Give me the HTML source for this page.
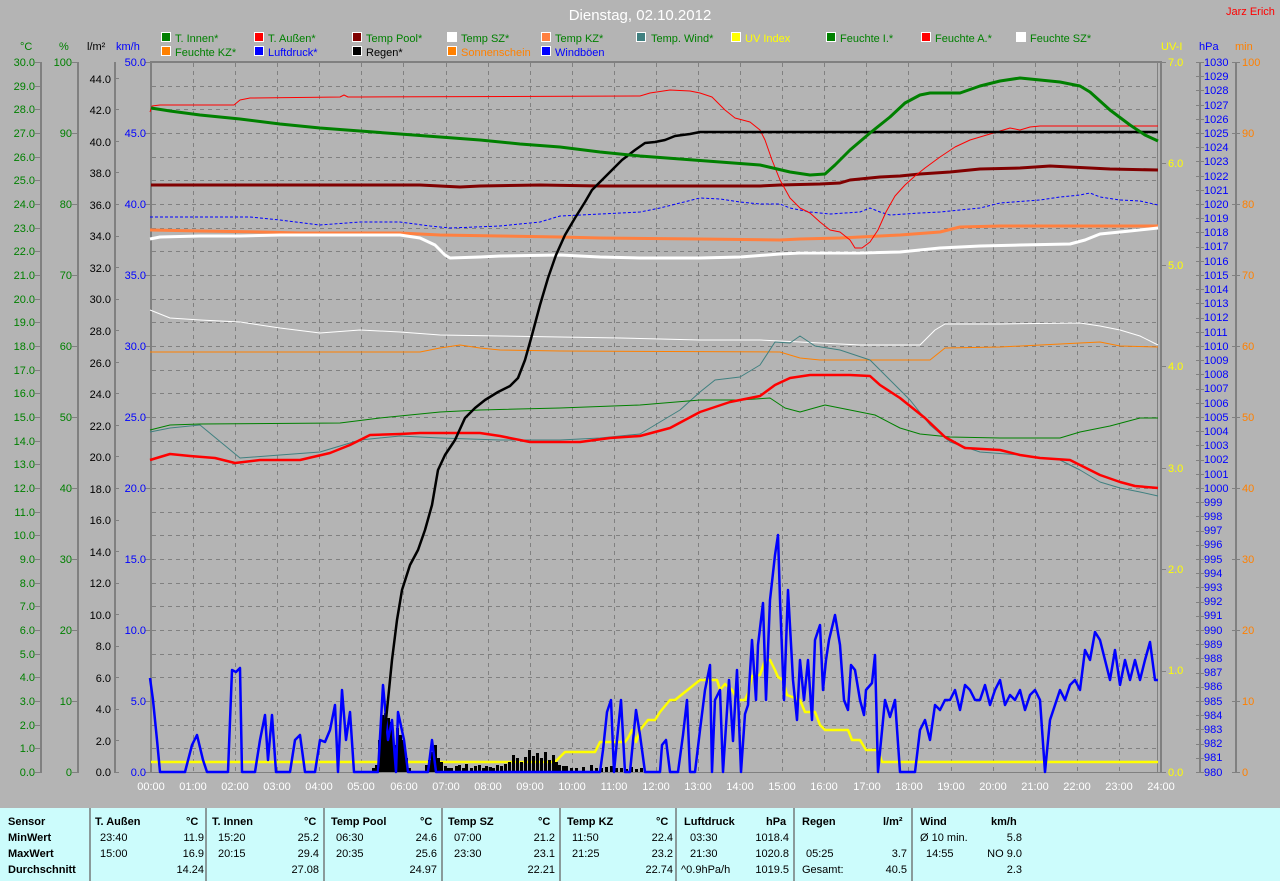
<!DOCTYPE html>
<html><head><meta charset="utf-8"><style>
html,body{margin:0;padding:0;background:#b4b4b4;}
body{width:1280px;height:881px;overflow:hidden;position:relative;font-family:"Liberation Sans",sans-serif;}
svg text{font-family:"Liberation Sans",sans-serif;font-size:11px;}
#tbl{position:absolute;left:0;top:808px;width:1280px;height:73px;background:#ccfcfc;font-size:11px;color:#000;}
#tbl .c{position:absolute;top:0;height:73px;border-right:2px solid #8a9a9a;}
#tbl span{position:absolute;white-space:nowrap;}
#tbl b{position:absolute;white-space:nowrap;}
</style></head><body>
<svg width="1280" height="808" style="position:absolute;left:0;top:0">
<text x="640" y="20" fill="#fff" font-size="15" text-anchor="middle" style="font-size:15px">Dienstag, 02.10.2012</text>
<text x="1226" y="15" fill="#ff0000">Jarz Erich</text>
<g stroke="#fff" stroke-width="1">
<rect x="161.5" y="32.5" width="9" height="9" fill="#008000"/><rect x="254.5" y="32.5" width="9" height="9" fill="#ff0000"/><rect x="352.5" y="32.5" width="9" height="9" fill="#800000"/><rect x="447.5" y="32.5" width="9" height="9" fill="#fff"/><rect x="541.5" y="32.5" width="9" height="9" fill="#ff8040"/><rect x="636.5" y="32.5" width="9" height="9" fill="#408080"/><rect x="731.5" y="32.5" width="9" height="9" fill="#ffff00"/><rect x="826.5" y="32.5" width="9" height="9" fill="#008000"/><rect x="921.5" y="32.5" width="9" height="9" fill="#ff0000"/><rect x="1016.5" y="32.5" width="9" height="9" fill="#fff"/>
<rect x="161.5" y="46.5" width="9" height="9" fill="#ff8000"/><rect x="254.5" y="46.5" width="9" height="9" fill="#0000ff"/><rect x="352.5" y="46.5" width="9" height="9" fill="#000"/><rect x="447.5" y="46.5" width="9" height="9" fill="#ff8000"/><rect x="541.5" y="46.5" width="9" height="9" fill="#0000ff"/>
</g>
<g fill="#008000">
<text x="175" y="42">T. Innen*</text><text x="268" y="42">T. Außen*</text><text x="366" y="42">Temp Pool*</text><text x="461" y="42">Temp SZ*</text><text x="555" y="42">Temp KZ*</text><text x="651" y="42">Temp. Wind*</text><text x="840" y="42">Feuchte I.*</text><text x="935" y="42">Feuchte A.*</text><text x="1030" y="42">Feuchte SZ*</text>
<text x="175" y="56">Feuchte KZ*</text></g>
<text x="745" y="42" fill="#ffff00">UV Index</text>
<text x="268" y="56" fill="#0000ff">Luftdruck*</text><text x="366" y="56" fill="#000">Regen*</text><text x="461" y="56" fill="#ff8000">Sonnenschein</text><text x="555" y="56" fill="#0000ff">Windböen</text>
<text x="20" y="50" fill="#008000">°C</text><text x="59" y="50" fill="#008000">%</text><text x="87" y="50" fill="#000">l/m²</text><text x="116" y="50" fill="#0000ff">km/h</text>
<text x="1161" y="50" fill="#ffff00">UV-I</text><text x="1199" y="50" fill="#0000ff">hPa</text><text x="1235" y="50" fill="#ff8000">min</text>
<line x1="150" y1="62" x2="1162" y2="62" stroke="#808080" stroke-width="2"/>
<line x1="151" y1="61" x2="151" y2="773" stroke="#808080" stroke-width="2"/>
<line x1="1157.5" y1="62" x2="1157.5" y2="772" stroke="#808080" stroke-width="1"/>
<line x1="1161" y1="62" x2="1161" y2="773" stroke="#808080" stroke-width="2"/>
<line x1="150" y1="772.5" x2="1162" y2="772.5" stroke="#808080" stroke-width="1"/>
<g id="grid" stroke="#808080" stroke-dasharray="4,4" stroke-width="1"></g>
<g stroke="#808080" stroke-width="2"><line x1="41" y1="62" x2="41" y2="773"/><line x1="78" y1="62" x2="78" y2="773"/><line x1="115" y1="62" x2="115" y2="773"/><line x1="1200" y1="62" x2="1200" y2="773"/><line x1="1236" y1="62" x2="1236" y2="773"/></g>
<g id="ticks" stroke="#808080" stroke-width="1"></g>
<g fill="#008000" text-anchor="end">
<text x="35" y="66">30.0</text><text x="35" y="90">29.0</text><text x="35" y="113">28.0</text><text x="35" y="137">27.0</text><text x="35" y="161">26.0</text><text x="35" y="184">25.0</text><text x="35" y="208">24.0</text><text x="35" y="232">23.0</text><text x="35" y="255">22.0</text><text x="35" y="279">21.0</text><text x="35" y="303">20.0</text><text x="35" y="326">19.0</text><text x="35" y="350">18.0</text><text x="35" y="374">17.0</text><text x="35" y="397">16.0</text><text x="35" y="421">15.0</text><text x="35" y="445">14.0</text><text x="35" y="468">13.0</text><text x="35" y="492">12.0</text><text x="35" y="516">11.0</text><text x="35" y="539">10.0</text><text x="35" y="563">9.0</text><text x="35" y="587">8.0</text><text x="35" y="610">7.0</text><text x="35" y="634">6.0</text><text x="35" y="658">5.0</text><text x="35" y="681">4.0</text><text x="35" y="705">3.0</text><text x="35" y="729">2.0</text><text x="35" y="752">1.0</text><text x="35" y="776">0.0</text>
<text x="72" y="66">100</text><text x="72" y="137">90</text><text x="72" y="208">80</text><text x="72" y="279">70</text><text x="72" y="350">60</text><text x="72" y="421">50</text><text x="72" y="492">40</text><text x="72" y="563">30</text><text x="72" y="634">20</text><text x="72" y="705">10</text><text x="72" y="776">0</text>
</g>
<g fill="#000" text-anchor="end">
<text x="111" y="83">44.0</text><text x="111" y="114">42.0</text><text x="111" y="146">40.0</text><text x="111" y="177">38.0</text><text x="111" y="209">36.0</text><text x="111" y="240">34.0</text><text x="111" y="272">32.0</text><text x="111" y="303">30.0</text><text x="111" y="335">28.0</text><text x="111" y="367">26.0</text><text x="111" y="398">24.0</text><text x="111" y="430">22.0</text><text x="111" y="461">20.0</text><text x="111" y="493">18.0</text><text x="111" y="524">16.0</text><text x="111" y="556">14.0</text><text x="111" y="587">12.0</text><text x="111" y="619">10.0</text><text x="111" y="650">8.0</text><text x="111" y="682">6.0</text><text x="111" y="713">4.0</text><text x="111" y="745">2.0</text><text x="111" y="776">0.0</text>
</g>
<g fill="#0000ff" text-anchor="end">
<text x="146" y="66">50.0</text><text x="146" y="137">45.0</text><text x="146" y="208">40.0</text><text x="146" y="279">35.0</text><text x="146" y="350">30.0</text><text x="146" y="421">25.0</text><text x="146" y="492">20.0</text><text x="146" y="563">15.0</text><text x="146" y="634">10.0</text><text x="146" y="705">5.0</text><text x="146" y="776">0.0</text>
</g>
<g fill="#ffff00"><text x="1168" y="66">7.0</text><text x="1168" y="167">6.0</text><text x="1168" y="269">5.0</text><text x="1168" y="370">4.0</text><text x="1168" y="472">3.0</text><text x="1168" y="573">2.0</text><text x="1168" y="674">1.0</text><text x="1168" y="776">0.0</text></g>
<g fill="#ff8000"><text x="1242" y="66">100</text><text x="1242" y="137">90</text><text x="1242" y="208">80</text><text x="1242" y="279">70</text><text x="1242" y="350">60</text><text x="1242" y="421">50</text><text x="1242" y="492">40</text><text x="1242" y="563">30</text><text x="1242" y="634">20</text><text x="1242" y="705">10</text><text x="1242" y="776">0</text></g>
<g fill="#0000ff" style="font-size:10.5px">
<text x="1204" y="66">1030</text><text x="1204" y="80">1029</text><text x="1204" y="94">1028</text><text x="1204" y="109">1027</text><text x="1204" y="123">1026</text><text x="1204" y="137">1025</text><text x="1204" y="151">1024</text><text x="1204" y="165">1023</text><text x="1204" y="180">1022</text><text x="1204" y="194">1021</text><text x="1204" y="208">1020</text><text x="1204" y="222">1019</text><text x="1204" y="236">1018</text><text x="1204" y="250">1017</text><text x="1204" y="265">1016</text><text x="1204" y="279">1015</text><text x="1204" y="293">1014</text><text x="1204" y="307">1013</text><text x="1204" y="321">1012</text><text x="1204" y="336">1011</text><text x="1204" y="350">1010</text><text x="1204" y="364">1009</text><text x="1204" y="378">1008</text><text x="1204" y="392">1007</text><text x="1204" y="407">1006</text><text x="1204" y="421">1005</text><text x="1204" y="435">1004</text><text x="1204" y="449">1003</text><text x="1204" y="463">1002</text><text x="1204" y="478">1001</text><text x="1204" y="492">1000</text><text x="1204" y="506">999</text><text x="1204" y="520">998</text><text x="1204" y="534">997</text><text x="1204" y="548">996</text><text x="1204" y="563">995</text><text x="1204" y="577">994</text><text x="1204" y="591">993</text><text x="1204" y="605">992</text><text x="1204" y="619">991</text><text x="1204" y="634">990</text><text x="1204" y="648">989</text><text x="1204" y="662">988</text><text x="1204" y="676">987</text><text x="1204" y="690">986</text><text x="1204" y="705">985</text><text x="1204" y="719">984</text><text x="1204" y="733">983</text><text x="1204" y="747">982</text><text x="1204" y="761">981</text><text x="1204" y="776">980</text>
</g>
<g fill="#fff" text-anchor="middle">
<text x="151" y="790">00:00</text><text x="193" y="790">01:00</text><text x="235" y="790">02:00</text><text x="277" y="790">03:00</text><text x="319" y="790">04:00</text><text x="361" y="790">05:00</text><text x="404" y="790">06:00</text><text x="446" y="790">07:00</text><text x="488" y="790">08:00</text><text x="530" y="790">09:00</text><text x="572" y="790">10:00</text><text x="614" y="790">11:00</text><text x="656" y="790">12:00</text><text x="698" y="790">13:00</text><text x="740" y="790">14:00</text><text x="782" y="790">15:00</text><text x="824" y="790">16:00</text><text x="867" y="790">17:00</text><text x="909" y="790">18:00</text><text x="951" y="790">19:00</text><text x="993" y="790">20:00</text><text x="1035" y="790">21:00</text><text x="1077" y="790">22:00</text><text x="1119" y="790">23:00</text><text x="1161" y="790">24:00</text>
</g>
<g fill="none" stroke-linejoin="round">
<polyline stroke="#ffffff" stroke-width="1" points="150,310 170,318 200,320 240,322 280,328 320,333 360,330 400,332 440,335 500,336 560,337 620,338 700,340 760,340 800,342 860,345 920,345 935,330 945,324 1000,324 1080,323 1100,326 1120,330 1140,336 1158,345"/>
<polyline stroke="#ff8000" stroke-width="1" points="150,352 420,352 440,348 460,345 480,348 500,350 560,351 780,352 800,358 820,360 930,360 945,348 1000,347 1080,343 1100,342 1120,346 1158,347"/>
<polyline stroke="#408080" stroke-width="1" points="150,432 170,428 200,425 240,458 280,455 320,452 360,440 400,436 440,438 500,440 560,440 600,438 640,434 680,410 700,392 715,380 740,377 760,365 775,342 790,343 800,336 815,346 840,350 870,360 890,380 910,400 930,425 950,442 980,452 1020,455 1060,460 1080,470 1100,482 1120,488 1140,492 1158,496"/>
<polyline stroke="#008000" stroke-width="1" points="150,430 170,425 200,424 340,423 380,418 440,412 480,410 560,408 640,405 700,400 740,400 770,398 785,408 800,412 825,405 850,410 875,415 900,428 920,434 950,437 1000,438 1060,438 1080,432 1110,426 1140,418 1158,418"/>
<polyline stroke="#ff0000" stroke-width="2.5" points="150,460 170,454 190,456 215,458 235,463 260,460 300,460 330,453 350,445 370,435 400,434 420,433 480,433 500,436 530,442 580,442 610,438 640,436 670,428 700,412 730,402 760,396 775,385 790,378 810,375 850,375 870,376 880,385 900,398 925,418 945,437 965,448 1000,450 1020,455 1040,458 1070,460 1080,465 1100,475 1120,482 1135,486 1158,488"/>
<polyline stroke="#ffff00" stroke-width="2.5" points="151,762 555,762 565,752 595,752 600,742 625,742 628,738 632,730 636,742 640,730 648,720 655,720 660,712 670,700 675,700 690,688 700,680 717,680 720,690 725,684 732,690 738,700 745,700 748,693 752,676 760,675 765,660 770,660 775,670 778,677 783,680 787,695 800,700 805,712 815,712 820,725 825,730 848,730 852,740 860,740 866,750 878,750 882,762 1158,762"/>
<path id="rain" fill="#000" stroke="none" d=""/>
<polyline stroke="#0000ff" stroke-width="2.5" points="150,678 153,700 157,740 160,772 185,772 192,745 197,735 203,760 207,772 228,772 232,670 236,672 240,668 242,772 255,772 260,740 265,715 268,760 272,715 276,772 290,772 295,740 300,735 305,772 315,772 320,740 325,742 330,730 335,705 338,772 342,690 346,740 350,712 354,772 378,772 383,685 388,740 392,720 396,772 398,712 404,740 408,772 428,772 432,740 436,772 600,772 603,750 607,712 611,700 614,772 617,740 621,700 625,772 630,772 636,710 640,735 645,772 660,772 662,745 666,740 670,772 678,772 683,735 687,700 690,772 695,772 700,730 705,690 710,665 712,772 715,700 720,690 723,772 729,680 733,741 737,670 741,772 745,714 748,705 752,640 756,700 758,645 763,603 766,700 770,600 775,555 778,535 780,600 784,700 788,590 793,680 797,720 800,660 804,700 808,660 812,720 815,640 820,625 823,690 826,660 829,640 835,615 840,645 844,700 848,710 851,665 855,670 860,700 864,715 866,690 872,683 875,655 878,772 885,700 890,717 895,700 900,772 915,772 920,730 925,720 930,740 935,705 940,710 945,700 950,700 955,690 960,710 965,685 970,690 975,700 980,700 985,685 990,705 995,690 1000,680 1005,705 1010,695 1015,700 1020,690 1025,710 1030,695 1035,690 1040,700 1045,772 1050,720 1055,705 1060,690 1065,700 1070,685 1075,680 1080,690 1085,650 1090,660 1095,632 1100,640 1105,660 1110,680 1115,650 1120,685 1125,660 1130,680 1135,660 1140,680 1145,660 1150,642 1155,680 1158,680"/>
<polyline stroke="#0000ff" stroke-width="1" stroke-dasharray="3,2" points="150,217 250,217 280,220 320,225 360,222 400,222 430,226 450,228 500,226 540,222 560,216 600,214 640,212 660,208 680,203 700,198 720,199 740,202 760,204 780,204 790,208 810,212 830,214 860,212 870,208 880,212 890,215 920,213 940,212 960,210 980,208 1000,203 1040,200 1060,197 1080,195 1090,193 1100,197 1120,200 1140,201 1158,205"/>
<polyline stroke="#ff8040" stroke-width="3" points="150,230 200,231 260,232 300,233 340,233 400,233 440,235 500,236 560,237 600,238 700,239 780,240 800,239 840,238 860,237 880,236 900,235 940,232 960,227 1000,226 1080,226 1120,226 1158,226"/>
<polyline stroke="#ffffff" stroke-width="3" points="150,239 160,237 200,236 240,236 280,235 400,235 420,238 435,245 445,255 450,258 480,257 500,256 560,255 600,257 640,258 700,258 740,257 780,254 800,253 860,253 900,252 940,248 980,246 1020,245 1070,244 1085,240 1100,234 1130,231 1158,228"/>
<polyline stroke="#800000" stroke-width="3" points="151,185 420,185 440,186 460,187 480,186 540,185 600,186 700,186 760,186 780,185 820,184 840,183 850,180 880,177 900,176 920,174 950,172 980,169 1020,168 1050,166 1070,167 1090,168 1110,169 1158,170"/>
<polyline stroke="#ff0000" stroke-width="1" points="150,112 152,106 160,105 200,105 234,105 240,100 250,98 340,97 344,95 348,97 360,97 640,96 650,93 670,90 690,91 700,93 712,97 725,110 735,118 750,122 760,130 765,140 772,160 780,180 790,198 800,208 810,213 820,222 830,230 840,232 850,240 855,248 862,248 870,242 878,230 886,212 895,196 905,185 915,176 925,168 940,157 955,147 970,140 990,134 1000,131 1010,128 1020,130 1030,127 1040,126 1060,126 1080,126 1158,126"/>
<polyline stroke="#000" stroke-width="2.5" points="380,772 384,740 388,700 392,660 397,620 402,590 410,565 418,550 425,530 432,505 438,470 445,455 455,440 465,418 475,408 485,400 498,392 510,386 518,378 525,360 532,335 540,305 548,278 556,255 565,235 575,218 585,202 592,190 600,182 610,172 622,160 635,150 645,143 655,142 665,140 675,136 690,134 700,132 1158,132"/>
<polyline stroke="#008000" stroke-width="3" points="151,108 170,111 200,115 240,119 280,124 320,128 360,131 400,134 440,137 480,140 520,144 560,147 600,152 640,156 680,159 720,162 760,165 790,172 810,175 825,174 835,165 850,150 870,133 890,117 905,103 920,95 930,93 960,93 980,86 1000,81 1020,78 1040,80 1060,82 1080,86 1090,92 1110,110 1130,125 1145,135 1158,141"/>
</g>
</svg>
<div id="tbl">
<div class="c" style="left:0;width:89px"></div><div class="c" style="left:89px;width:116px"></div><div class="c" style="left:207px;width:116px"></div><div class="c" style="left:325px;width:116px"></div><div class="c" style="left:443px;width:116px"></div><div class="c" style="left:561px;width:114px"></div><div class="c" style="left:677px;width:116px"></div><div class="c" style="left:795px;width:116px"></div>
<b style="left:8px;top:8px">Sensor</b><b style="left:8px;top:24px">MinWert</b><b style="left:8px;top:40px">MaxWert</b><b style="left:8px;top:56px">Durchschnitt</b>
<b style="left:95px;top:8px">T. Außen</b><b style="left:186px;top:8px">°C</b><span style="left:100px;top:24px">23:40</span><span style="left:100px;top:40px">15:00</span><span style="right:1076px;top:24px">11.9</span><span style="right:1076px;top:40px">16.9</span><span style="right:1076px;top:56px">14.24</span>
<b style="left:212px;top:8px">T. Innen</b><b style="left:304px;top:8px">°C</b><span style="left:218px;top:24px">15:20</span><span style="left:218px;top:40px">20:15</span><span style="right:961px;top:24px">25.2</span><span style="right:961px;top:40px">29.4</span><span style="right:961px;top:56px">27.08</span>
<b style="left:331px;top:8px">Temp Pool</b><b style="left:420px;top:8px">°C</b><span style="left:336px;top:24px">06:30</span><span style="left:336px;top:40px">20:35</span><span style="right:843px;top:24px">24.6</span><span style="right:843px;top:40px">25.6</span><span style="right:843px;top:56px">24.97</span>
<b style="left:448px;top:8px">Temp SZ</b><b style="left:538px;top:8px">°C</b><span style="left:454px;top:24px">07:00</span><span style="left:454px;top:40px">23:30</span><span style="right:725px;top:24px">21.2</span><span style="right:725px;top:40px">23.1</span><span style="right:725px;top:56px">22.21</span>
<b style="left:567px;top:8px">Temp KZ</b><b style="left:656px;top:8px">°C</b><span style="left:572px;top:24px">11:50</span><span style="left:572px;top:40px">21:25</span><span style="right:607px;top:24px">22.4</span><span style="right:607px;top:40px">23.2</span><span style="right:607px;top:56px">22.74</span>
<b style="left:684px;top:8px">Luftdruck</b><b style="left:766px;top:8px">hPa</b><span style="left:690px;top:24px">03:30</span><span style="left:690px;top:40px">21:30</span><span style="left:681px;top:56px">^0.9hPa/h</span><span style="right:491px;top:24px">1018.4</span><span style="right:491px;top:40px">1020.8</span><span style="right:491px;top:56px">1019.5</span>
<b style="left:802px;top:8px">Regen</b><b style="left:883px;top:8px">l/m²</b><span style="left:806px;top:40px">05:25</span><span style="left:802px;top:56px">Gesamt:</span><span style="right:373px;top:40px">3.7</span><span style="right:373px;top:56px">40.5</span>
<b style="left:920px;top:8px">Wind</b><b style="left:991px;top:8px">km/h</b><span style="left:920px;top:24px">Ø 10 min.</span><span style="left:926px;top:40px">14:55</span><span style="right:258px;top:24px">5.8</span><span style="right:258px;top:40px">NO 9.0</span><span style="right:258px;top:56px">2.3</span>
</div>
<script>
(function(){
var ns="http://www.w3.org/2000/svg";
function L(g,x1,y1,x2,y2){var l=document.createElementNS(ns,"line");l.setAttribute("x1",x1);l.setAttribute("y1",y1);l.setAttribute("x2",x2);l.setAttribute("y2",y2);g.appendChild(l);}
var g=document.getElementById("grid");
for(var h=1;h<24;h++){var x=Math.round(151+h*42.08)+0.5;L(g,x,63,x,772);}
for(var i=1;i<30;i++){var y=Math.round(62+i*23.667)+0.5;L(g,152,y,1157,y);}
var t=document.getElementById("ticks");
for(var i=0;i<=30;i++){var y=Math.round(62+i*23.667)+0.5;L(t,35,y,41,y);}
for(var i=0;i<=10;i++){var y=Math.round(62+i*71)+0.5;L(t,72,y,78,y);L(t,145,y,151,y);L(t,1232,y,1240,y);}
for(var v=0;v<=44;v+=2){var y=Math.round(772-v*15.778)+0.5;L(t,115,y,119,y);}
for(var v=0;v<=7;v++){var y=Math.round(772-v*101.43)+0.5;L(t,1161,y,1166,y);}
for(var v=0;v<=50;v++){var y=Math.round(772-v*14.2)+0.5;L(t,1196,y,1204,y);}
var bars=[[372,768],[375,765],[378,740],[381,715],[384,713],[387,718],[390,722],[393,745],[396,728],[399,735],[402,740],[405,758],[408,768],[425,765],[428,760],[431,752],[434,745],[437,758],[440,762],[444,766],[447,768],[450,768],[455,766],[458,765],[462,768],[465,764],[470,768],[474,766],[478,765],[482,768],[485,766],[489,767],[492,768],[496,765],[500,766],[504,764],[508,762],[512,755],[516,758],[520,762],[524,757],[528,750],[532,756],[536,753],[540,758],[544,752],[548,760],[552,755],[555,762],[558,765],[562,766],[565,766],[570,768],[575,768],[582,767],[590,765],[595,768],[600,768],[605,767],[610,766],[615,768],[620,768],[625,769],[630,767],[635,769],[640,768]];
var d="";bars.forEach(function(b){d+="M"+b[0]+" 772V"+b[1]+"h3V772z";});
document.getElementById("rain").setAttribute("d",d);
})();
</script>
</body></html>
